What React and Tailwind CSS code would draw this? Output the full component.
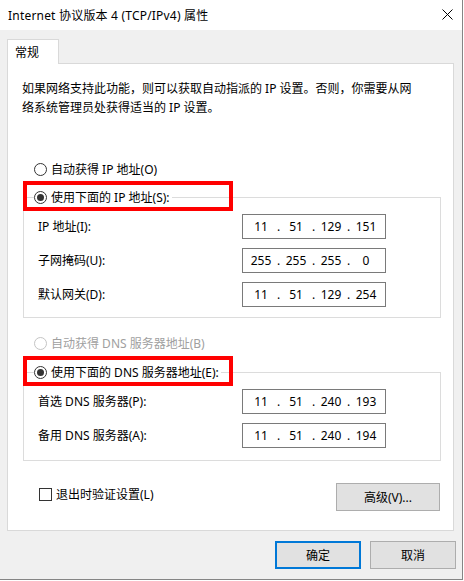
import { Fragment } from 'react'

function Radio({ checked, disabled }) {
  return (
    <span
      className={
        disabled
          ? 'flex h-[13px] w-[13px] shrink-0 items-center justify-center rounded-full border border-[#c4c4c4] bg-white'
          : 'flex h-[13px] w-[13px] shrink-0 items-center justify-center rounded-full border border-[#333333] bg-white'
      }
    >
      {checked && <span className="h-[7px] w-[7px] rounded-full bg-[#333333]" />}
    </span>
  )
}

function IpBox({ parts }) {
  return (
    <div className="flex h-[25px] w-[144px] shrink-0 items-center border border-[#7a7a7a] bg-white px-[3px] leading-[16px]">
      {parts.map((p, i) => (
        <Fragment key={i}>
          {i > 0 && <span className="w-[5px] text-center">.</span>}
          <span className="w-[30px] text-center">{p}</span>
        </Fragment>
      ))}
    </div>
  )
}

function Row({ label, parts }) {
  return (
    <div className="flex items-center">
      <span className="w-[218px] pl-[14px]">{label}</span>
      <IpBox parts={parts} />
    </div>
  )
}

// group box with its radio sitting on the top border, red box is the screenshot annotation
function Group({ title, children, bottom }) {
  return (
    <div className="relative ml-[15px] w-[418px]">
      <div className="relative z-10 ml-[11px] flex h-[16px] w-fit items-center gap-[4px] bg-white pr-[2px]">
        <Radio checked />
        <span>{title}</span>
      </div>
      <div className={bottom}>{children}</div>
      <div className="pointer-events-none absolute left-0 top-[-8px] z-20 h-[30px] w-[210px] border-[4px] border-[#ff0000]" />
    </div>
  )
}

export default function App() {
  return (
    <div className="flex h-[580px] w-[463px] flex-col border-b border-r border-[#858585] bg-[#f0f0f0] text-[12px] leading-[19px] text-black font-['Noto_Sans','Noto_Sans_CJK_SC',sans-serif]">
      <div className="flex h-[30px] shrink-0 items-center justify-between bg-white pl-[8px] pr-[9px]">
        <span className="tracking-[0.2px]">Internet 协议版本 4 (TCP/IPv4) 属性</span>
        <svg width="11" height="11" viewBox="0 0 11 11" className="mt-[-1px]">
          <path d="M0.5 0.5 L10.5 10.5 M10.5 0.5 L0.5 10.5" stroke="#000" strokeWidth="1" />
        </svg>
      </div>

      <div className="mt-[9px] ml-[7px]">
        <div className="relative z-10 -mb-[1px] flex h-[25px] w-[52px] items-center border border-b-0 border-[#d9d9d9] bg-white pl-[7px]">
          常规
        </div>
        <div className="h-[468px] w-[447px] border border-[#d9d9d9] bg-white">
          <p className="pl-[14px] pr-[30px] pt-[15px]">
            如果网络支持此功能，则可以获取自动指派的 IP 设置。否则，你需要从网络系统管理员处获得适当的 IP 设置。
          </p>

          <div className="ml-[26px] mt-[44px] flex h-[16px] items-center gap-[4px]">
            <Radio />
            <span>自动获得 IP 地址(O)</span>
          </div>

          <div className="mt-[12px]">
            <Group title="使用下面的 IP 地址(S):" bottom="-mt-[8px] flex flex-col gap-[9px] border border-[#dcdcdc] pb-[10px] pt-[16px]">
              <Row label="IP 地址(I):" parts={['11', '51', '129', '151']} />
              <Row label="子网掩码(U):" parts={['255', '255', '255', '0']} />
              <Row label="默认网关(D):" parts={['11', '51', '129', '254']} />
            </Group>
          </div>

          <div className="ml-[26px] mt-[17px] flex h-[16px] items-center gap-[4px] text-[#a0a0a0]">
            <Radio disabled />
            <span>自动获得 DNS 服务器地址(B)</span>
          </div>

          <div className="mt-[13px]">
            <Group title="使用下面的 DNS 服务器地址(E):" bottom="-mt-[8px] flex flex-col gap-[9px] border border-[#dcdcdc] pb-[12px] pt-[16px]">
              <Row label="首选 DNS 服务器(P):" parts={['11', '51', '240', '193']} />
              <Row label="备用 DNS 服务器(A):" parts={['11', '51', '240', '194']} />
            </Group>
          </div>

          <div className="mt-[22px] flex items-start justify-between pl-[31px] pr-[13px]">
            <label className="mt-[2px] flex items-center gap-[4px]">
              <span className="h-[13px] w-[13px] border border-[#333333] bg-white" />
              <span>退出时验证设置(L)</span>
            </label>
            <button className="h-[28px] w-[104px] border border-[#adadad] bg-[#e1e1e1]">高级(V)...</button>
          </div>
        </div>
      </div>

      <div className="mt-[10px] flex justify-end gap-[9px] pr-[6px]">
        <button className="h-[28px] w-[86px] border-2 border-[#0078d7] bg-[#e1e1e1]">确定</button>
        <button className="h-[28px] w-[86px] border border-[#adadad] bg-[#e1e1e1]">取消</button>
      </div>
    </div>
  )
}
